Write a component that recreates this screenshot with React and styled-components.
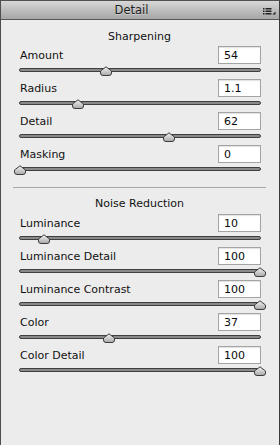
import React from "react";
import styled, { createGlobalStyle } from "styled-components";

const GlobalStyle = createGlobalStyle`
  html, body {
    margin: 0;
    padding: 0;
    background: #ececec;
  }
  body {
    font-family: "DejaVu Sans", "Liberation Sans", sans-serif;
  }
`;

const sharpening = [
  { label: "Amount", value: "54", pos: 54 / 150 },
  { label: "Radius", value: "1.1", pos: 0.6 / 2.5 },
  { label: "Detail", value: "62", pos: 0.62 },
  { label: "Masking", value: "0", pos: 0 },
];

const noise = [
  { label: "Luminance", value: "10", pos: 0.1 },
  { label: "Luminance Detail", value: "100", pos: 1 },
  { label: "Luminance Contrast", value: "100", pos: 1 },
  { label: "Color", value: "37", pos: 0.37 },
  { label: "Color Detail", value: "100", pos: 1 },
];

function Thumb() {
  return (
    <svg width="12" height="10" viewBox="0 0 12 10">
      <defs>
        <linearGradient id="tg" x1="0" y1="0" x2="0" y2="1">
          <stop offset="0" stopColor="#f4f4f4" />
          <stop offset="1" stopColor="#a8a8a8" />
        </linearGradient>
      </defs>
      <path
        d="M0.5 5 L6 0.8 L11.5 5 V7 Q11.5 9.5 9 9.5 H3 Q0.5 9.5 0.5 7 Z"
        fill="url(#tg)"
        stroke="#3c3c3c"
        strokeWidth="1"
      />
    </svg>
  );
}

function Control({ label, value, pos }) {
  return (
    <StyledControl>
      <div className="line">
        <span>{label}</span>
        <input type="text" defaultValue={value} />
      </div>
      <div className="slider">
        <div className="track"></div>
        <div className="thumb" style={{ left: `${pos * 240 - 4}px` }}>
          <Thumb />
        </div>
      </div>
    </StyledControl>
  );
}

function App() {
  return (
    <>
      <GlobalStyle />
      <StyledPanel>
        <Header>
          <div className="tab"></div>
          <span>Detail</span>
          <svg className="menu" width="13" height="7" viewBox="0 0 13 7">
            <g fill="#222">
              <rect x="0" y="0" width="1.5" height="1.5" />
              <rect x="2.5" y="0" width="6" height="1.5" />
              <rect x="0" y="2.5" width="1.5" height="1.5" />
              <rect x="2.5" y="2.5" width="6" height="1.5" />
              <rect x="0" y="5" width="1.5" height="1.5" />
              <rect x="2.5" y="5" width="6" height="1.5" />
              <path d="M9.5 6.5 L12.5 6.5 L12.5 3.5 Z" />
            </g>
          </svg>
        </Header>
        <Body>
          <SectionTitle>Sharpening</SectionTitle>
          {sharpening.map((c) => (
            <Control key={c.label} {...c} />
          ))}
          <Divider />
          <SectionTitle $noise>Noise Reduction</SectionTitle>
          {noise.map((c) => (
            <Control key={c.label} {...c} />
          ))}
        </Body>
      </StyledPanel>
    </>
  );
}

const StyledPanel = styled.div`
  width: 280px;
  height: 445px;
  box-sizing: border-box;
  background: #ececec;
  border-left: 1px solid #4e4e4e;
  border-right: 1px solid #3a3a3a;
  border-top: 1px solid #505050;
  display: flex;
  flex-direction: column;
  overflow: hidden;
`;

const Header = styled.div`
  position: relative;
  height: 19px;
  flex-shrink: 0;
  box-sizing: border-box;
  border-bottom: 1px solid #575757;
  background: linear-gradient(#d8d8d8, #b9b9b9 60%, #a6a6a6);
  display: flex;
  align-items: center;
  justify-content: center;
  padding-right: 17px;
  font-size: 11.5px;
  color: #1e1e1e;
  text-shadow: 0 1px 0 rgba(255, 255, 255, 0.35);

  .tab {
    position: absolute;
    top: -1px;
    left: 48px;
    width: 27px;
    height: 1px;
    background: #dcdcdc;
  }

  .menu {
    position: absolute;
    right: 3px;
    top: 7px;
  }
`;

const Body = styled.div`
  display: flex;
  flex-direction: column;
  padding: 0 18px 0 17px;
`;

const SectionTitle = styled.div`
  text-align: center;
  font-size: 11px;
  color: #111;
  height: 15px;
  line-height: 15px;
  margin-top: ${(p) => (p.$noise ? 8 : 9)}px;
  margin-bottom: ${(p) => (p.$noise ? 3 : 2)}px;
`;

const Divider = styled.div`
  height: 1px;
  background: #a9a9a9;
  margin: 9px -5px 0 -5px;
`;

const StyledControl = styled.div`
  height: 33px;
  display: flex;
  flex-direction: column;

  .line {
    height: 18px;
    display: flex;
    align-items: center;
    justify-content: space-between;
  }

  .line span {
    font-size: 11px;
    color: #111;
    padding-left: 2px;
    padding-top: 1px;
  }

  input {
    width: 43px;
    height: 18px;
    box-sizing: border-box;
    border: 1px solid #a4a4a4;
    box-shadow: inset 0 1px 1px rgba(0, 0, 0, 0.12);
    background: #fff;
    font-family: "DejaVu Sans", "Liberation Sans", sans-serif;
    font-size: 11px;
    color: #0a0a0a;
    padding: 1px 0 0 5px;
    margin: 0;
    outline: none;
  }

  .slider {
    position: relative;
    height: 15px;
    padding-top: 4px;
    box-sizing: border-box;
  }

  .track {
    height: 4px;
    border-radius: 2px;
    box-sizing: border-box;
    border: 1px solid #3f3f3f;
    background: #8a8a8a;
    margin-left: 1px;
  }

  .thumb {
    position: absolute;
    top: 2px;
    width: 12px;
    height: 10px;
    line-height: 0;
  }
`;

export default App;
